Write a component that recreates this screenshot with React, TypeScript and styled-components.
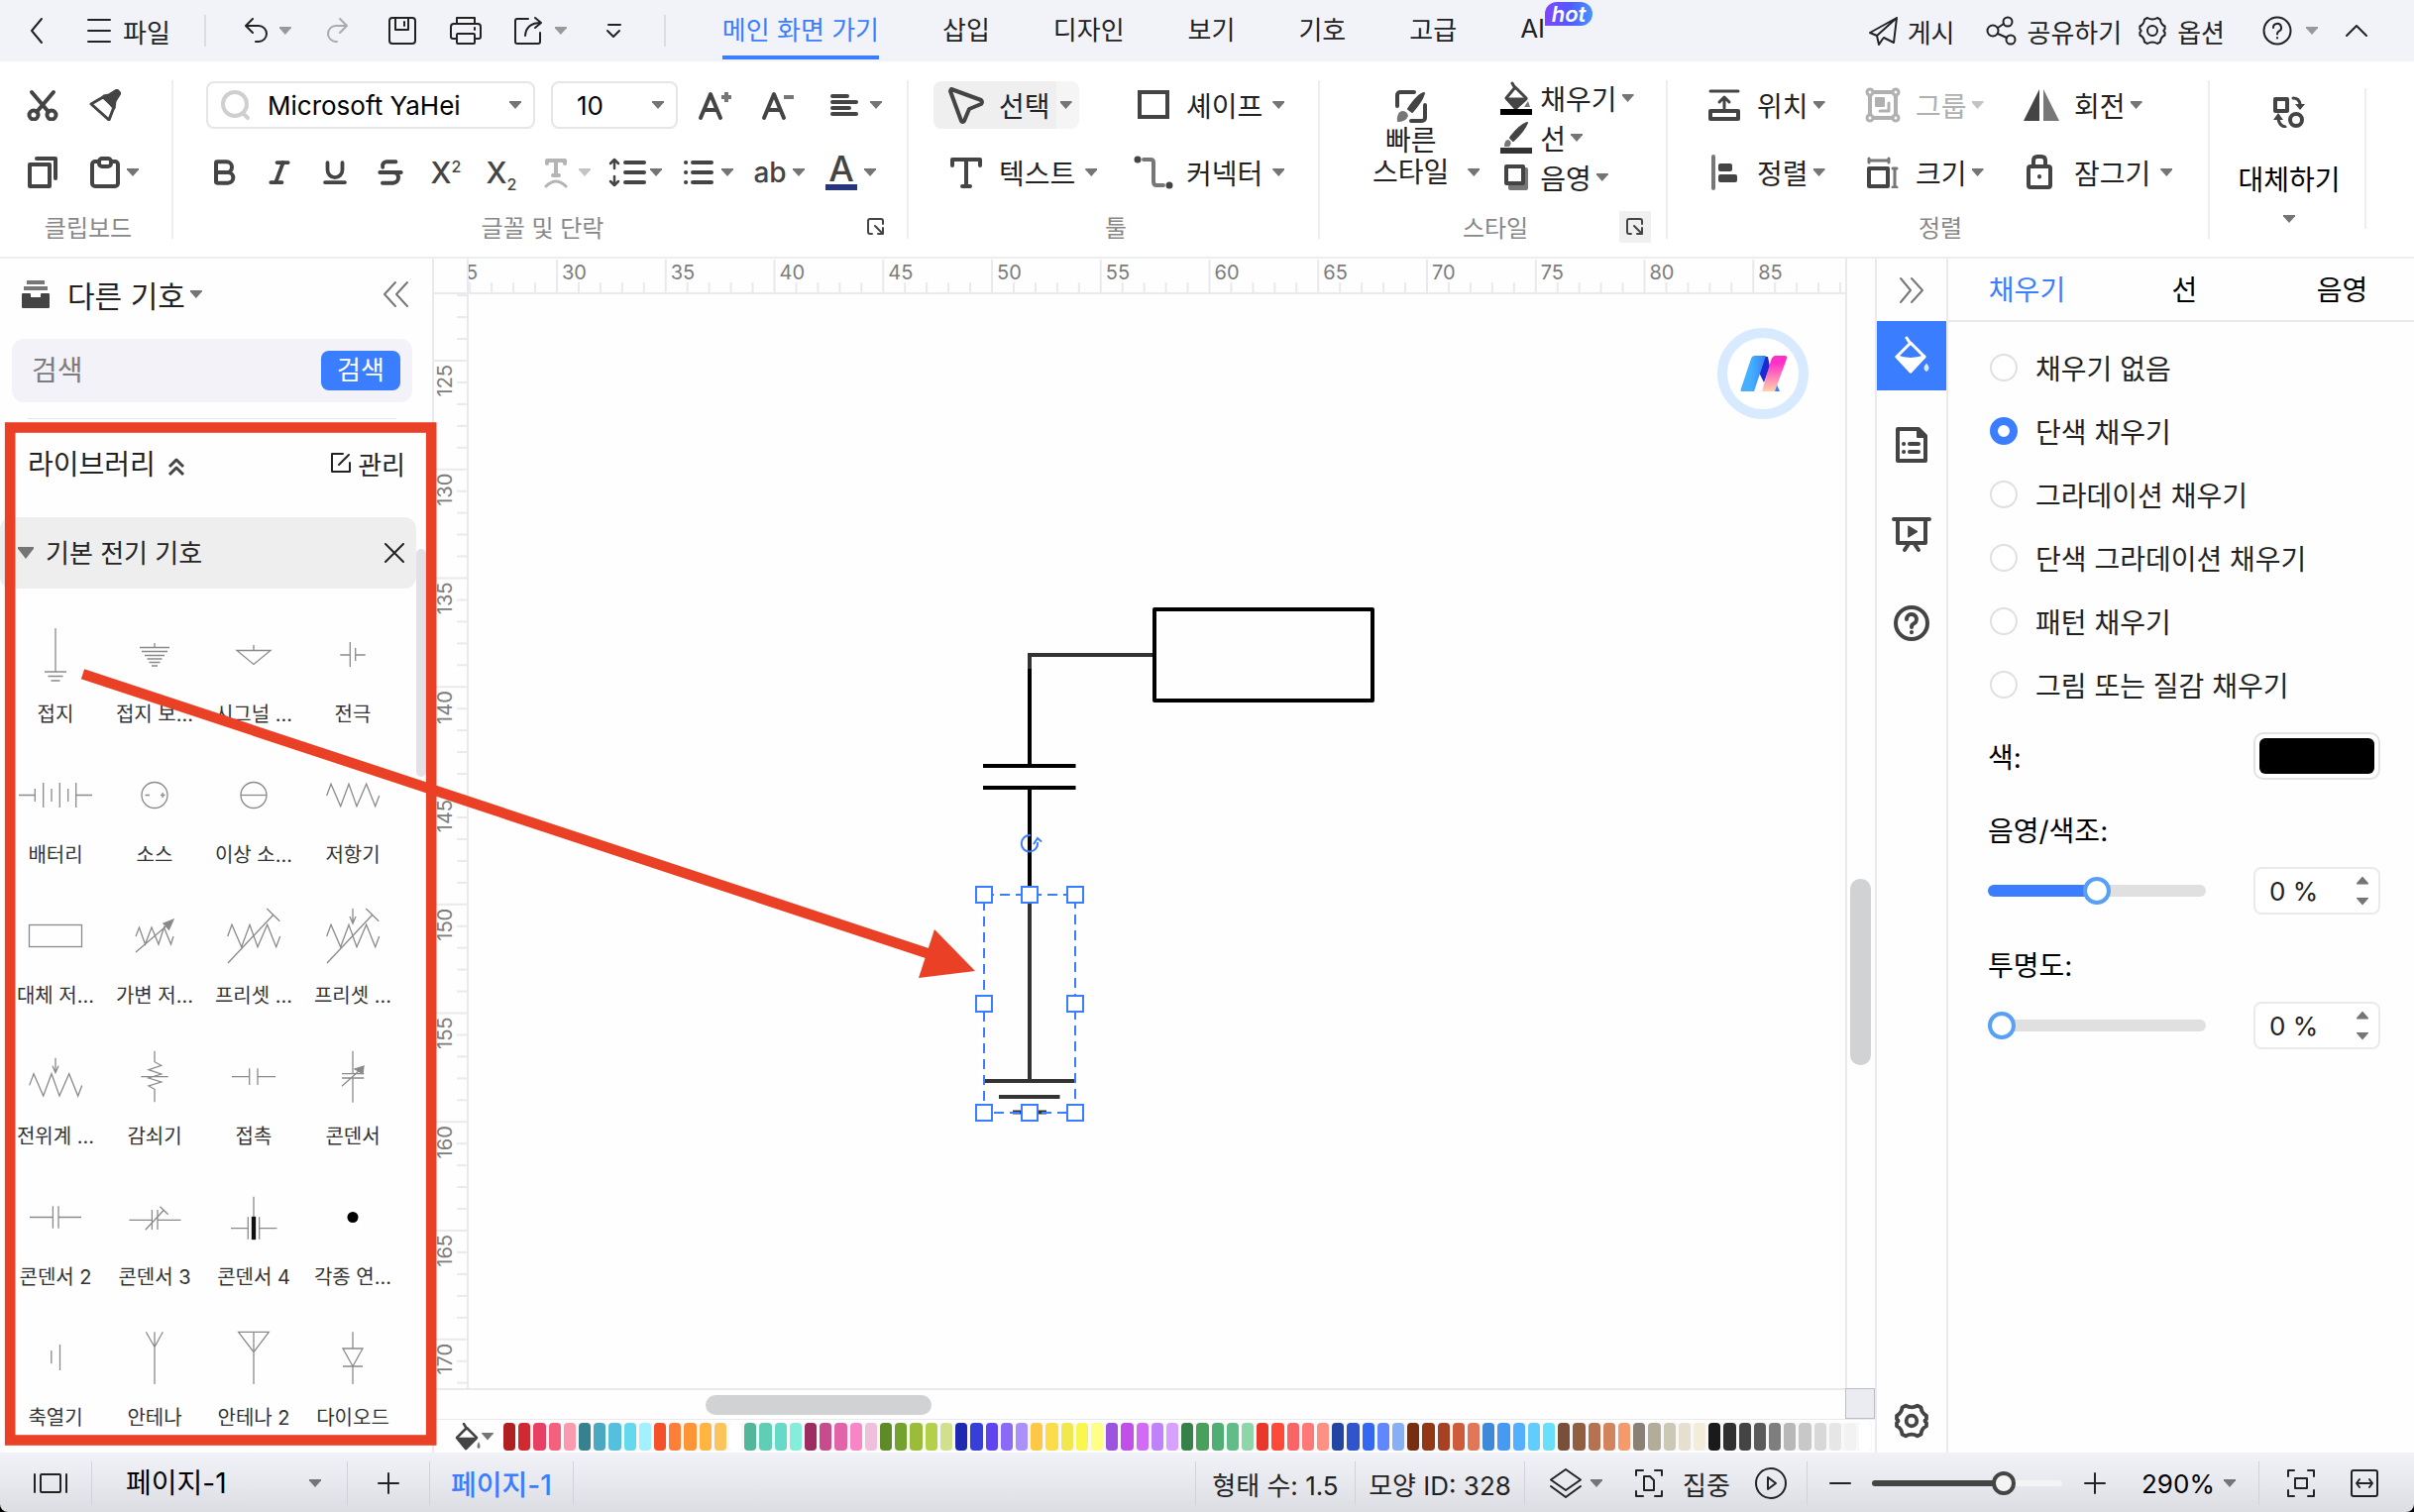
import React from "react";
import styled, { createGlobalStyle, css } from "styled-components";
import { Bold, Italic, Underline, Strikethrough } from "lucide-react";

const FONT = '"Inter", "Noto Sans CJK KR", sans-serif';
const BLUE = "#3a7eff";
const INK = "#444444";
const LINE = "#e9e9ee";
const RED = "#ea4025";

const Global = createGlobalStyle`
  * { box-sizing: border-box; }
  html, body, #root { height: 100%; }
  body { margin: 0; background: #000; font-family: ${FONT}; color: #222; overflow: hidden; }
  button, input, select { font-family: inherit; color: inherit; }
  svg { display: block; flex: none; }
`;

const Shell = styled.div`
  position: relative;
  display: flex;
  flex-direction: column;
  height: 100vh;
  min-height: 900px;
  white-space: nowrap;
`;

const plainButton = css`
  border: 0;
  padding: 0;
  margin: 0;
  background: none;
  display: flex;
  align-items: center;
`;

const Caret = styled.span<{ $color?: string; $up?: boolean; $size?: number }>`
  flex: none;
  width: ${(p) => p.$size ?? 12}px;
  height: ${(p) => ((p.$size ?? 12) > 12 ? 12 : 8)}px;
  background: ${(p) => p.$color ?? "#757575"};
  clip-path: ${(p) =>
    p.$up ? "polygon(0 85%, 50% 0, 100% 85%, 100% 100%, 0 100%)" : "polygon(0 0, 100% 0, 100% 15%, 50% 100%, 0 15%)"};
`;

/* ---------- icons ---------- */

type IconProps = { w?: number; h?: number; sw?: number; color?: string; children: React.ReactNode };
const Icon = ({ w = 32, h = 32, sw = 2, color = "currentColor", children }: IconProps) => (
  <svg width={w} height={h} viewBox={`0 0 ${w} ${h}`} fill="none" stroke={color} strokeWidth={sw} strokeLinecap="round" strokeLinejoin="round" aria-hidden="true">
    {children}
  </svg>
);

const gearPath =
  "M11 3 Q16 6 21 3 L24 4.600 Q24.400 9.600 28.600 11.500 V14.500 Q26 16 28.600 17.500 V20.500 Q24.400 22.400 24 27.400 L21 29 Q16 26 11 29 L8 27.400 Q7.600 22.400 3.400 20.500 V17.500 Q6 16 3.400 14.500 V11.500 Q7.600 9.600 8 4.600 Z";

const BucketIcon = ({ color = INK, drop = "#777" }: { color?: string; drop?: string }) => (
  <Icon w={40} h={40} color={color} sw={3}>
    <path d="M15 2 L19 8" />
    <path d="M19 7 L33 21 L19 36 L5 21 Z" />
    <path d="M5 21 Q19 26 33 21 L19 36 Z" fill={color} />
    <path d="M35 29 q3 4 0 6 q-3 -2 0 -6z" fill={drop} stroke={drop} strokeWidth="2" />
  </Icon>
);

/* ---------- top bar ---------- */

const TopBar = styled.header`
  display: flex;
  align-items: center;
  height: 62px;
  flex: none;
  padding: 0 42px 0 20px;
  background: #f2f3f9;
  font-size: 26px;
`;

const TopButton = styled.button<{ $ml?: number; $gap?: number }>`
  ${plainButton}
  height: 48px;
  gap: ${(p) => p.$gap ?? 10}px;
  margin-left: ${(p) => p.$ml ?? 32}px;
  font-size: 26px;
  color: #222;
`;

const TopDivider = styled.span`
  width: 2px;
  height: 32px;
  margin-left: 34px;
  background: #dcdde3;
`;

const Tabs = styled.nav`
  display: flex;
  height: 62px;
  gap: 64px;
  margin-left: 57px;
`;

const Tab = styled.a<{ $active?: boolean }>`
  position: relative;
  display: flex;
  align-items: center;
  height: 60px;
  border-bottom: 4px solid ${(p) => (p.$active ? BLUE : "transparent")};
  color: ${(p) => (p.$active ? BLUE : "#222")};
  text-decoration: none;
`;

const HotBadge = styled.span`
  position: absolute;
  left: 100%;
  top: 2px;
  width: 48px;
  height: 24px;
  border-radius: 12px 12px 12px 0;
  background: linear-gradient(90deg, #8344ff, #4f5cff 55%, #4595ff);
  color: #fff;
  font-size: 22px;
  font-style: italic;
  font-weight: 600;
  line-height: 24px;
  text-align: center;
`;

const TopRight = styled.div`
  display: flex;
  align-items: center;
  margin-left: auto;
`;

/* ---------- ribbon ---------- */

const Ribbon = styled.section`
  display: flex;
  flex: none;
  height: 199px;
  background: #fff;
  border-bottom: 2px solid #eeeeee;
`;

const Group = styled.div<{ $w: number; $pad: number }>`
  display: flex;
  flex-direction: column;
  width: ${(p) => p.$w}px;
  padding-top: 20px;
  & > :first-child {
    padding-left: ${(p) => p.$pad}px;
  }
`;

const GroupDivider = styled.span<{ $short?: boolean }>`
  width: 2px;
  height: ${(p) => (p.$short ? 142 : 160)}px;
  margin-top: ${(p) => (p.$short ? 27 : 19)}px;
  background: #eeeeee;
`;

const GroupBody = styled.div`
  display: flex;
  flex-direction: column;
  gap: 20px;
  height: 116px;
`;

const ToolGrid = styled.div<{ $cols: string }>`
  display: grid;
  grid-template-columns: ${(p) => p.$cols};
  grid-auto-rows: 48px;
  row-gap: 20px;
  justify-items: start;
`;

const GroupFooter = styled.div`
  display: grid;
  grid-template-columns: 1fr auto 1fr;
  align-items: center;
  height: 32px;
  margin-top: 13px;
  padding: 0 15px 0 20px;
  color: #888;
  font-size: 24px;
`;

const Launcher = styled.button<{ $hover?: boolean }>`
  ${plainButton}
  grid-column: 3;
  justify-self: end;
  justify-content: center;
  width: 32px;
  height: 32px;
  color: ${INK};
  background: ${(p) => (p.$hover ? "#f0f0f0" : "none")};
`;

const FooterLabel = styled.span`
  grid-column: 2;
`;

const Row = styled.div<{ $indent?: number; $gap?: number }>`
  display: flex;
  align-items: center;
  height: 48px;
  gap: ${(p) => p.$gap ?? 0}px;
  padding-left: ${(p) => p.$indent ?? 0}px;
`;

const IconCell = styled.button<{ $w?: number }>`
  ${plainButton}
  justify-content: center;
  width: ${(p) => p.$w ?? 56}px;
  height: 48px;
  color: ${INK};
`;

const PasteCell = styled.button`
  ${plainButton}
  height: 48px;
  padding-left: 6px;
  gap: 6px;
  color: ${INK};
`;

const DropCell = styled.button<{ $muted?: boolean }>`
  ${plainButton}
  width: 72px;
  height: 48px;
  padding-left: 4px;
  color: ${(p) => (p.$muted ? "#b4b4b4" : INK)};
`;

const DropIcon = styled.span`
  display: flex;
  justify-content: center;
  width: 46px;
`;

const Letter = styled.span<{ $size?: number }>`
  font-size: ${(p) => p.$size ?? 32}px;
  font-weight: 500;
  line-height: 32px;
  & sup, & sub { font-size: 16px; line-height: 0; font-weight: 500; }
`;

const FontColor = styled(Letter)`
  display: flex;
  justify-content: center;
  width: 32px;
  height: 36px;
  line-height: 28px;
  border-bottom: 6px solid #27357f;
`;

const Combo = styled.label<{ $w: number }>`
  display: flex;
  align-items: center;
  width: ${(p) => p.$w}px;
  height: 48px;
  padding: 0 12px;
  margin-right: 16px;
  border: 2px solid #e6e6e6;
  border-radius: 8px;
  background: #fff;
`;

const BareSelect = styled.select<{ $pad?: number; $size?: number }>`
  flex: 1;
  min-width: 0;
  appearance: none;
  border: 0;
  outline: 0;
  background: none;
  padding: 0 0 0 ${(p) => p.$pad ?? 0}px;
  font-size: ${(p) => p.$size ?? 26}px;
  color: #000;
`;

const Tool = styled.button<{ $on?: boolean; $muted?: boolean; $gap?: number }>`
  ${plainButton}
  height: 48px;
  padding-right: 7px;
  gap: ${(p) => p.$gap ?? 10}px;
  border-radius: 8px;
  font-size: 28px;
  color: ${(p) => (p.$muted ? "#b0b0b0" : "#222")};
  background: ${(p) => (p.$on ? "linear-gradient(90deg, #efefef 124px, #f5f5f5 124px)" : "none")};
`;

const ToolFace = styled.span<{ $iw?: number }>`
  display: grid;
  grid-template-columns: ${(p) => p.$iw ?? 66}px auto;
  align-items: center;
  & > svg { justify-self: center; }
`;

const StyleBody = styled.div`
  display: flex;
  gap: 13px;
  height: 116px;
`;

const QuickStyle = styled.button`
  ${plainButton}
  align-items: flex-end;
  gap: 19px;
  height: 108px;
  font-size: 28px;
  line-height: 32px;
`;

const QuickFace = styled.span`
  display: flex;
  flex-direction: column;
  align-items: center;
`;

const CaretSlot = styled.span`
  display: flex;
  align-items: center;
  height: 32px;
`;

const StyleList = styled.div`
  display: flex;
  flex-direction: column;
  margin-top: -3px;
  & > button { height: 40px; }
`;

const ReplaceButton = styled.button`
  ${plainButton}
  flex-direction: column;
  width: 156px;
  padding: 35px 0 0 4px;
  font-size: 28px;
  color: #000;
  & > span:nth-of-type(1) { margin-top: 31px; height: 44px; line-height: 44px; }
  & > span:nth-of-type(2) { margin-top: 13px; }
`;

/* ---------- left panel ---------- */

const Main = styled.main`
  display: flex;
  flex: 1;
  min-height: 0;
  background: #fefefe;
`;

const Side = styled.aside`
  display: flex;
  flex-direction: column;
  width: 438px;
  flex: none;
  border-right: 2px solid ${LINE};
  overflow: hidden;
`;

const SideHead = styled.div`
  display: flex;
  align-items: center;
  height: 72px;
  padding: 0 22px;
`;

const SideTitle = styled.button`
  ${plainButton}
  gap: 5px;
  margin: 0 auto 0 18px;
  font-size: 30px;
  color: #222;
`;

const BareButton = styled.button`
  ${plainButton}
  font-size: 26px;
  gap: 7px;
  color: #222;
`;

const SearchBox = styled.form`
  display: flex;
  align-items: center;
  height: 64px;
  margin: 9px 20px 0 12px;
  padding: 0 12px 0 20px;
  border-radius: 12px;
  background: #f2f2f8;
`;

const SearchInput = styled.input`
  flex: 1;
  min-width: 0;
  border: 0;
  outline: 0;
  padding: 0;
  background: none;
  font-size: 28px;
  &::placeholder { color: #7c7c7c; opacity: 1; }
`;

const SearchButton = styled.button`
  width: 80px;
  height: 40px;
  padding: 0;
  border: 0;
  border-radius: 8px;
  background: ${BLUE};
  color: #fff;
  font-size: 26px;
  line-height: 40px;
`;

const SideRule = styled.hr`
  width: 372px;
  height: 1px;
  margin: 16px 0 0 28px;
  border: 0;
  background: #e6e6ea;
`;

const LibraryHead = styled.div`
  display: flex;
  align-items: center;
  height: 88px;
  padding: 0 27px 0 28px;
  font-size: 28px;
  & > svg { margin: 8px auto 0 12px; }
`;

const LibraryScroll = styled.div`
  position: relative;
  margin-top: 11px;
  flex: 1;
  min-height: 0;
`;

const ScrollThumb = styled.span`
  position: absolute;
  top: 32px;
  right: 6px;
  width: 10px;
  height: 230px;
  border-radius: 5px;
  background: #e2e1e8;
`;

const Category = styled.div`
  display: flex;
  align-items: center;
  height: 72px;
  margin-right: 16px;
  padding: 0 12px 0 18px;
  border-radius: 12px;
  background: #eeeeee;
  font-size: 26px;
  & > span:nth-of-type(2) { margin: 0 auto 0 12px; padding-bottom: 4px; }
`;

const SymbolGrid = styled.div`
  display: grid;
  grid-template-columns: repeat(4, 100px);
  grid-auto-rows: 142px;
  padding: 27px 0 0 6px;
`;

const SymbolCell = styled.figure`
  display: flex;
  flex-direction: column;
  align-items: center;
  margin: 0;
`;

const SymbolName = styled.figcaption`
  margin-top: 6px;
  font-size: 20px;
  line-height: 28px;
  color: #333;
`;

const zig = (dy = 0) => `M23.700 ${40 + dy} L28 ${28.3 + dy} L37.700 ${50.7 + dy} L46 ${28.3 + dy} L54 ${50.7 + dy} L63.700 ${28.3 + dy} L72.700 ${50.7 + dy} L76.700 ${40 + dy}`;
const downArrow = (dy = 0) => `M50 ${12 + dy} V${27 + dy} M47 ${20 + dy} L50 ${27 + dy} L53 ${20 + dy}`;

const symbols: { name: string; art: React.ReactNode }[] = [
  { name: "접지", art: <path d="M50 13V57M39 57H61M42.500 61.500H57.500M45.500 66H54.500" /> },
  { name: "접지 보...", art: <path d="M50 28V32.500M35 32.500H65M37 36.500H63M40 40.500H60M42.500 44H57.500M44.500 47.500H55.500M47 51H53" /> },
  { name: "시그널 ...", art: <path d="M50 30V35.500M33 35.500H67L50 49.500Z" /> },
  { name: "전극", art: <path d="M37.300 40H47.300M47.300 27V52M52.700 33V46M52.700 40H62.700" /> },
  { name: "배터리", art: <path d="M13 39.500H29.300M29.300 33V46M37.700 27V52M46 33V46M54.300 27V52M62.700 33V46M70.700 27V52M70.700 39.500H87" /> },
  { name: "소스", art: <><circle cx="50" cy="39.500" r="13" /><path d="M40.500 39.500H45M56 39.500H60.500M58.200 37V42" /></> },
  { name: "이상 소...", art: <><circle cx="50" cy="39.500" r="13" /><path d="M37 39.500H63" /></> },
  { name: "저항기", art: <path d={zig()} /> },
  { name: "대체 저...", art: <rect x="23.500" y="28.500" width="53" height="22" /> },
  { name: "가변 저...", art: <><path d="M31 40L34.500 31L40.500 48L47 31L54 48L59.500 31L66.500 48L69 40M31 56L66 26" /><path d="M69 23L59 27L64.500 33Z" fill="#888" /></> },
  { name: "프리셋 ...", art: <path d={zig() + "M24 67L70.300 17.700M63.300 12L76.300 24.700"} /> },
  { name: "프리셋 ...", art: <path d={zig() + "M24 67L70.300 17.700M63.300 12L76.300 24.700" + downArrow()} /> },
  { name: "전위계 ...", art: <path d={zig(8.4) + downArrow(8.7)} /> },
  { name: "감쇠기", art: <path d="M50 13.700V24.700L56.700 28.300L44 32.700L56.700 37L44 41L56.700 45L44 49L50 52.300V65.300M36.300 39.700H63.700" /> },
  { name: "접촉", art: <path d="M28 39.700H45.700M45.700 31.300V48M54 31.300V48M54 39.700H72" /> },
  { name: "콘덴서", art: <><path d="M50 13.700V36.700M50 41V65.700M39 36.700H61.300M39 41H61.300M39 49.300L56 34" /><path d="M61 29L52 32L60 36.500Z" fill="#888" /></> },
  { name: "콘덴서 2", art: <path d="M24 39.500H47.400M53 39.500H76M47.400 28.300V50.700M53 28.300V50.700" /> },
  { name: "콘덴서 3", art: <path d="M24.400 42.300H47.400M53 42.300H76.500M47.400 32V52M53 32V52M40.700 52.300L59.600 32M55.500 28.700L63.700 36.700" /> },
  { name: "콘덴서 4", art: <><path d="M50 18.700V40M44.300 39.300V61.700M55.700 39.300V61.700M27 50.700H44.300M55.700 50.700H73.400" /><rect x="48.500" y="39.500" width="3" height="22" fill="#111" stroke="#111" /></> },
  { name: "각종 연...", art: <circle cx="50" cy="39.500" r="5.500" fill="#000" stroke="none" /> },
  { name: "축열기", art: <path d="M45.800 32V45.300M54.500 26V52" /> },
  { name: "안테나", art: <path d="M50 13.300V66M41.300 13.300L50 28.500L58.300 13.300" /> },
  { name: "안테나 2", art: <path d="M34.600 13.300H65.300L50 33.700ZM50 13.300V66" /> },
  { name: "다이오드", art: <path d="M50 13.300V30M40 30H60L50 48ZM40 48H60M50 48V66" /> },
];

/* ---------- workspace ---------- */

const Work = styled.section`
  display: flex;
  flex-direction: column;
  flex: 1;
  min-width: 0;
`;

const Sheet = styled.div`
  display: grid;
  grid-template-columns: 35px 1fr 30px;
  grid-template-rows: 36px 1fr 31px;
  flex: 1;
  min-height: 0;
`;

const Corner = styled.div`
  border-right: 2px solid ${LINE};
  border-bottom: 2px solid ${LINE};
`;

const RulerX = styled.div`
  overflow: hidden;
  border-bottom: 2px solid ${LINE};
`;

const RulerY = styled.div`
  overflow: hidden;
  border-right: 2px solid ${LINE};
`;

const ScrollY = styled.div`
  grid-column: 3;
  grid-row: 1 / 3;
  display: flex;
  flex-direction: column;
  padding: 0 4px 0 3px;
  border-left: 2px solid ${LINE};
`;

const ScrollX = styled.div`
  grid-column: 1 / 3;
  display: flex;
  padding: 5px 0 4px;
  border-top: 2px solid ${LINE};
`;

const Spacer = styled.span<{ $grow: number }>`
  flex: ${(p) => p.$grow} 1 0;
`;

const Thumb = styled.span<{ $grow: number }>`
  flex: ${(p) => p.$grow} 1 0;
  border-radius: 10px;
  background: #d1d2d4;
`;

const ScrollCorner = styled.div`
  border: 1px solid #bdbdc6;
  background: #ebebf2;
`;

const Canvas = styled.div`
  position: relative;
  overflow: hidden;
  background: #fefefe;
`;

const AiButton = styled.button`
  position: absolute;
  top: 34px;
  right: 37px;
  display: flex;
  align-items: center;
  justify-content: center;
  width: 92px;
  height: 92px;
  padding: 0;
  border: 10px solid #d8eaff;
  border-radius: 50%;
  background: #fff;
`;

const Palette = styled.div`
  display: flex;
  align-items: center;
  flex: none;
  height: 34px;
  padding-right: 3px;
  border-top: 1px solid ${LINE};
`;

const PaletteFill = styled.button`
  ${plainButton}
  width: 66px;
  margin-right: 4px;
  padding-left: 20px;
`;

const Swatches = styled.div`
  display: flex;
  flex: 1;
  gap: 3px;
  height: 28px;
  background: #f8f8f8;
`;

const Swatch = styled.span<{ $c: string }>`
  flex: 1;
  border-radius: 4px;
  background: ${(p) => p.$c};
`;

const paletteColors = `b02020 d02a30 e84062 f6607f f99aae 37808f 4aa8c0 55bfde 64d9ee a3f0ff
f4502a ff7e38 fd9436 ffb53f fbc45c ffffff 52b69a 5fceb4 66dac8 86ecdc
9c2c62 c64c8c e264a8 f886c6 efc0dc 5e8a28 74a22e 9abc3a b2d048 d2e08e
1e28b0 3640d8 6044f0 8c6af8 aa90f8 fcc846 fcdc48 f0e84c faf650 fdff86
9a54e0 c250e8 d26cf6 c082fa d8a0ff 36804a 48a05a 50ae74 62bc88 8ed6a8
e8382c ff4a3a fa6466 ff7878 ff9084 2444a4 3054cc 3468f0 6088fc 88aef4
762e12 923814 a84024 ce5c3c e27658 3e8ad8 469af4 52b0fe 62ccfa 68e0fc
78503a 925e42 b47250 d4845c f49a6c 8a8076 b4ac9a ccc8b6 e6dece f2ecd8
1a1a1a 303030 444444 5a5a5a 7e7e7e b8b8b8 c8c8c8 d8d8d8 e6e6e6 f2f2f2 ffffff`.split(/\s+/);

/* ---------- right side ---------- */

const Rail = styled.nav`
  display: flex;
  flex-direction: column;
  align-items: stretch;
  width: 74px;
  flex: none;
  gap: 20px;
  border-left: 2px solid ${LINE};
  border-right: 2px solid ${LINE};
  color: ${INK};
`;

const RailButton = styled.button<{ $on?: boolean; $h?: number; $last?: boolean }>`
  ${plainButton}
  justify-content: center;
  height: ${(p) => p.$h ?? 70}px;
  margin-top: ${(p) => (p.$last ? "auto" : p.$on ? "-20px" : "0")};
  color: ${INK};
  background: ${(p) => (p.$on ? BLUE : "none")};
`;

const Inspector = styled.aside`
  display: flex;
  flex-direction: column;
  width: 470px;
  flex: none;
`;

const PropTabs = styled.div`
  display: grid;
  grid-template-columns: repeat(3, 1fr);
  gap: 20px;
  height: 64px;
  padding: 0 3px 2px 10px;
  border-bottom: 2px solid ${LINE};
`;

const PropTab = styled.button<{ $on?: boolean }>`
  ${plainButton}
  justify-content: center;
  font-size: 28px;
  color: ${(p) => (p.$on ? BLUE : "#000")};
`;

const RadioList = styled.fieldset`
  display: flex;
  flex-direction: column;
  margin: 0;
  padding: 14px 0 0 42px;
  border: 0;
`;

const RadioRow = styled.label`
  display: flex;
  align-items: center;
  gap: 18px;
  height: 64px;
  font-size: 28px;
`;

const Radio = styled.input`
  appearance: none;
  width: 28px;
  height: 28px;
  margin: 0;
  border: 2px solid #e0e0e0;
  border-radius: 50%;
  background: #fff;
  &:checked { border: 8px solid ${BLUE}; }
`;

const PropSection = styled.section`
  & + & { margin-top: 12px; }
`;

const PropRow = styled.div<{ $h: number }>`
  display: flex;
  align-items: center;
  justify-content: space-between;
  height: ${(p) => p.$h}px;
  padding: 0 34px 0 40px;
  font-size: 28px;
  color: #000;
`;

const ColorInput = styled.input`
  appearance: none;
  width: 128px;
  height: 48px;
  padding: 4px;
  border: 2px solid #e2e2e2;
  border-radius: 10px;
  background: #fff;
  &::-webkit-color-swatch-wrapper { padding: 0; }
  &::-webkit-color-swatch { border: 0; border-radius: 6px; }
`;

const Range = styled.input<{ $fill: number }>`
  appearance: none;
  width: 220px;
  height: 28px;
  margin: 0;
  background: none;
  &::-webkit-slider-runnable-track {
    height: 12px;
    border-radius: 6px;
    background: linear-gradient(90deg, ${BLUE} ${(p) => p.$fill}%, #e0e0e0 ${(p) => p.$fill}%);
  }
  &::-webkit-slider-thumb {
    appearance: none;
    width: 28px;
    height: 28px;
    margin-top: -8px;
    border: 4px solid #58a0f5;
    border-radius: 50%;
    background: #fff;
  }
`;

const Spin = styled.span`
  display: flex;
  align-items: center;
  width: 128px;
  height: 48px;
  padding: 0 10px 0 14px;
  border: 2px solid #eaeaea;
  border-radius: 8px;
  background: #fff;
`;

const SpinInput = styled.input`
  flex: 1;
  min-width: 0;
  border: 0;
  outline: 0;
  padding: 0;
  font-size: 26px;
  color: #222;
`;

const SpinButtons = styled.span`
  display: flex;
  flex-direction: column;
  gap: 13px;
`;

/* ---------- status bar ---------- */

const Status = styled.footer`
  display: flex;
  align-items: center;
  flex: none;
  height: 60px;
  padding: 2px 28px 0 14px;
  border-radius: 0 0 8px 8px;
  background: linear-gradient(180deg, #f1f2f8, #e8e9ef 50%, #dcdde2);
  font-size: 26px;
  color: #222;
`;

const StatusDivider = styled.span`
  width: 1px;
  height: 44px;
  background: #d2d3da;
`;

const StatusCell = styled.div<{ $w?: number }>`
  display: flex;
  align-items: center;
  justify-content: center;
  width: ${(p) => (p.$w ? `${p.$w}px` : "auto")};
`;

const StatusButton = styled.button<{ $w: number; $blue?: boolean; $gap?: number }>`
  ${plainButton}
  justify-content: center;
  gap: ${(p) => p.$gap ?? 8}px;
  width: ${(p) => p.$w}px;
  height: 48px;
  font-size: ${(p) => (p.$blue ? 28 : 26)}px;
  font-weight: ${(p) => (p.$blue ? 500 : 400)};
  color: ${(p) => (p.$blue ? BLUE : "#222")};
`;

const PageSelect = styled.label<{ $w: number; $l: number; $r: number }>`
  display: flex;
  align-items: center;
  width: ${(p) => p.$w}px;
  padding: 0 ${(p) => p.$r}px 0 ${(p) => p.$l}px;
`;

const Push = styled.span`
  flex: 1;
`;

const ZoomRange = styled.input`
  appearance: none;
  width: 192px;
  height: 24px;
  margin: 0;
  background: none;
  &::-webkit-slider-runnable-track {
    height: 6px;
    border-radius: 3px;
    background: linear-gradient(90deg, ${INK} 70%, #f4f4f6 70%);
  }
  &::-webkit-slider-thumb {
    appearance: none;
    width: 24px;
    height: 24px;
    margin-top: -9px;
    border: 4px solid ${INK};
    border-radius: 50%;
    background: #f4f4f4;
  }
`;

const Annotation = styled.svg`
  position: absolute;
  top: 0;
  left: 0;
  pointer-events: none;
`;

/* ---------- drawing helpers ---------- */

const MINOR = 21.95;

const HorizontalRuler = () => {
  const ticks = [];
  for (let i = 0; i < 64; i++) {
    const x = 89 + (i - 4) * MINOR;
    if (x < 0) continue;
    const major = (i - 4) % 5 === 0;
    ticks.push(<line key={i} x1={x} x2={x} y1={major ? 1 : 24} y2="36" stroke={LINE} strokeWidth="2" />);
    if (major) ticks.push(<text key={`t${i}`} x={x + 5} y="21">{30 + (i - 4)}</text>);
  }
  return (
    <svg width="100%" height="36" fill="#7c7c7c" fontSize="20" fontFamily={FONT}>
      <text x="-3" y="21">5</text>
      {ticks}
    </svg>
  );
};

const VerticalRuler = () => {
  const ticks = [];
  for (let i = 0; i < 51; i++) {
    const y = 67 + (i - 3) * MINOR;
    const major = (i - 3) % 5 === 0;
    ticks.push(<line key={i} y1={y} y2={y} x1={major ? 0 : 23} x2="35" stroke={LINE} strokeWidth="2" />);
    if (major) ticks.push(<text key={`t${i}`} transform={`translate(18 ${y + 4}) rotate(-90)`} textAnchor="end">{125 + (i - 3)}</text>);
  }
  return (
    <svg width="35" height="100%" fill="#7c7c7c" fontSize="20" fontFamily={FONT}>
      {ticks}
    </svg>
  );
};

const handles = [993, 1039, 1085].flatMap((x) => [903, 1013, 1123].map((y) => [x, y])).filter(([x, y]) => !(x === 1039 && y === 1013));

const Diagram = () => (
  <svg width="100%" height="100%" fill="none" strokeWidth="4" aria-label="회로도">
    <g transform="translate(-473 -297)">
      <rect x="1165" y="615" width="220" height="92" stroke="#000" strokeLinejoin="round" />
      <path d="M1163 661H1039V676" stroke="#333" />
      <path d="M1039 675V773M992 773H1085.500M992 795H1085.500M1039 795V895" stroke="#000" />
      <path d="M1039 903V1091M993 1091H1085M1008 1107H1069.500M1022 1122.500H1056" stroke="#333" />
      <g stroke={BLUE} strokeWidth="2">
        <rect x="993" y="903" width="92" height="220" strokeDasharray="10 6" />
        <path d="M1040 843.200A8.200 8.200 0 1 0 1047 850M1043 852L1047 846L1051 849.500" />
        {handles.map(([x, y]) => (
          <rect key={`${x}-${y}`} x={x - 8} y={y - 8} width="16" height="16" fill="#fff" />
        ))}
      </g>
    </g>
  </svg>
);

const SideArrows = ({ right }: { right?: boolean }) => (
  <Icon w={28} h={28} color="#777">
    <path d={right ? "M3 2L13 14L3 26M14 2L25 14L14 26" : "M13 2L2 14L13 26M25 2L14 14L25 26"} />
  </Icon>
);

const LauncherIcon = () => (
  <Icon w={20} h={20}>
    <path d="M6 17H4a2 2 0 0 1-2-2V4a2 2 0 0 1 2-2H15a2 2 0 0 1 2 2V7M9 9L17 17M17 11V17H12" />
  </Icon>
);

const fills = ["채우기 없음", "단색 채우기", "그라데이션 채우기", "단색 그라데이션 채우기", "패턴 채우기", "그림 또는 질감 채우기"];

export default function App() {
  return (
    <Shell>
      <Global />
      <TopBar>
        <TopButton $ml={0} aria-label="뒤로"><Icon><path d="M22 4L12 16L22 28" /></Icon></TopButton>
        <TopButton $ml={36} $gap={12}>
          <Icon w={24} h={26}><path d="M1 2H23M1 13H23M1 24H23" /></Icon>파일
        </TopButton>
        <TopDivider />
        <TopButton aria-label="실행 취소"><Icon><path d="M15 4L8 11L15 18M9 11H21A8 8 0 0 1 21 27H18" /></Icon><Caret $color="#999" /></TopButton>
        <TopButton aria-label="다시 실행"><Icon color="#aaa"><path d="M17 4L24 11L17 18M23 11H13A8 8 0 0 0 13 27H14" /></Icon></TopButton>
        <TopButton aria-label="저장"><Icon><rect x="3" y="3" width="26" height="26" rx="3" /><path d="M9 3V15H22V3M18 7V11" /></Icon></TopButton>
        <TopButton aria-label="인쇄"><Icon><path d="M7 9V3H25V9M7 24H3a2 2 0 0 1-2-2V12a3 3 0 0 1 3-3H28a3 3 0 0 1 3 3V22a2 2 0 0 1-2 2H25M25 13V15" /><rect x="7" y="19" width="18" height="10" rx="1" /></Icon></TopButton>
        <TopButton aria-label="내보내기"><Icon><path d="M15 4H4a2 2 0 0 0-2 2V27a2 2 0 0 0 2 2H25a2 2 0 0 0 2-2V18M12 21Q13 8 28 8M22 3L28 8L22 13" /></Icon><Caret $color="#999" /></TopButton>
        <TopButton aria-label="사용자 지정"><Icon><path d="M10 10H22M9 16L15 22L21 16" /></Icon></TopButton>
        <TopDivider />
        <Tabs>
          <Tab href="#home" $active>메인 화면 가기</Tab>
          <Tab href="#insert">삽입</Tab>
          <Tab href="#design">디자인</Tab>
          <Tab href="#view">보기</Tab>
          <Tab href="#symbol">기호</Tab>
          <Tab href="#advanced">고급</Tab>
          <Tab href="#ai">AI<HotBadge>hot</HotBadge></Tab>
        </Tabs>
        <TopRight>
          <TopButton $gap={9}><Icon><path d="M30 3L3 18L10 21L30 3L27 28L17 23M10 21L12 30L16 24" /></Icon>게시</TopButton>
          <TopButton $gap={9} $ml={32}><Icon><circle cx="7" cy="16" r="5.500" /><circle cx="22" cy="7" r="4.500" /><circle cx="25" cy="25" r="4.500" /><path d="M12 13L18 9M12 19L21 23" /></Icon>공유하기</TopButton>
          <TopButton $gap={9} $ml={15}><Icon><path d={gearPath} /><circle cx="16" cy="16" r="5" /></Icon>옵션</TopButton>
          <TopButton $gap={13} $ml={37} aria-label="도움말"><Icon><circle cx="16" cy="16" r="13.500" /><path d="M12 13a4 4 0 1 1 5.500 3.600Q16 17.500 16 19.500M16 23V23.500" /></Icon><Caret $color="#999" /></TopButton>
          <TopButton $ml={23} aria-label="리본 접기"><Icon><path d="M6 21L16 11L26 21" /></Icon></TopButton>
        </TopRight>
      </TopBar>

      <Ribbon>
        <Group $w={173} $pad={21}>
          <GroupBody>
            <Row $gap={19}>
              <IconCell $w={44} aria-label="잘라내기"><Icon sw={4}><path d="M5 3L22 23M27 3L10 23" /><circle cx="7" cy="26" r="4.500" /><circle cx="25" cy="26" r="4.500" /></Icon></IconCell>
              <IconCell $w={44} aria-label="서식 복사"><Icon sw={3}><path d="M14 8L25 18L20 31L2 15Z" /><path d="M15 7L20 6L28 1L31 4L26 12L25 19Z" fill="currentColor" /></Icon></IconCell>
            </Row>
            <Row $gap={19}>
              <IconCell $w={44} aria-label="복사"><Icon sw={4}><rect x="3" y="8" width="20" height="22" /><path d="M10 2H29V22" /></Icon></IconCell>
              <PasteCell aria-label="붙여넣기"><Icon sw={4}><rect x="3" y="5" width="26" height="25" rx="3" /><rect x="10" y="2" width="12" height="8" rx="3" fill="#fff" /></Icon><Caret /></PasteCell>
            </Row>
          </GroupBody>
          <GroupFooter><FooterLabel>클립보드</FooterLabel></GroupFooter>
        </Group>
        <GroupDivider />

        <Group $w={740} $pad={23}>
          <GroupBody>
            <Row $indent={10}>
              <Combo $w={332}>
                <Icon sw={4} color="#cfcfcf"><ellipse cx="15" cy="15" rx="12" ry="12" /><path d="M23 24L28 29" /></Icon>
                <BareSelect $pad={16} aria-label="글꼴"><option>Microsoft YaHei</option></BareSelect>
                <Caret />
              </Combo>
              <Combo $w={128}>
                <BareSelect $pad={12} aria-label="글꼴 크기"><option>10</option></BareSelect>
                <Caret />
              </Combo>
              <IconCell $w={42} aria-label="글꼴 크게"><Icon w={34} sw={4}><path d="M3 29L13 5L23 29M7 21H19" /><path d="M29 3V13M24 8H34" stroke="#777" strokeLinecap="butt" /></Icon></IconCell>
              <IconCell $w={86} aria-label="글꼴 작게"><Icon w={34} sw={4}><path d="M3 29L13 5L23 29M7 21H19" /><path d="M23 8H33" stroke="#777" strokeLinecap="butt" /></Icon></IconCell>
              <DropCell aria-label="단락 정렬"><DropIcon><Icon w={34} sw={4}><path d="M2 7H17M2 13H26M2 19H19M2 25H26" /></Icon></DropIcon><Caret /></DropCell>
            </Row>
            <Row>
              <IconCell aria-label="굵게"><Bold size={32} strokeWidth={3} /></IconCell>
              <IconCell aria-label="기울임꼴"><Italic size={30} strokeWidth={3} /></IconCell>
              <IconCell aria-label="밑줄"><Underline size={30} strokeWidth={3} /></IconCell>
              <IconCell aria-label="취소선"><Strikethrough size={32} strokeWidth={3} /></IconCell>
              <IconCell aria-label="위 첨자"><Letter $size={30}>X<sup>2</sup></Letter></IconCell>
              <IconCell aria-label="아래 첨자"><Letter $size={30}>X<sub>2</sub></Letter></IconCell>
              <DropCell $muted aria-label="텍스트 효과"><DropIcon><Icon sw={4}><path d="M7 7V4H25V7M16 4V19M13 19H19" /><path d="M6 30Q16 20 26 30" strokeWidth="3" /></Icon></DropIcon><Caret $color="#c4c4c4" /></DropCell>
              <DropCell aria-label="줄 간격"><DropIcon><Icon w={38} sw={4}><path d="M17 6H36M17 16H36M17 26H36" /><path d="M6 3V12M2 7L6 3L10 7M6 20V29M2 25L6 29L10 25" strokeWidth="2.500" /></Icon></DropIcon><Caret /></DropCell>
              <DropCell aria-label="글머리 기호"><DropIcon><Icon sw={4}><path d="M10 6H29M10 16H29M10 26H29M3 6H3.200M3 16H3.200M3 26H3.200" /></Icon></DropIcon><Caret /></DropCell>
              <DropCell aria-label="대소문자"><DropIcon><Letter $size={28}>ab</Letter></DropIcon><Caret /></DropCell>
              <DropCell aria-label="글꼴 색"><DropIcon><FontColor $size={36}>A</FontColor></DropIcon><Caret /></DropCell>
            </Row>
          </GroupBody>
          <GroupFooter><FooterLabel>글꼴 및 단락</FooterLabel><Launcher aria-label="글꼴 설정"><LauncherIcon /></Launcher></GroupFooter>
        </Group>
        <GroupDivider />

        <Group $w={413} $pad={25}>
          <ToolGrid $cols="189px auto">
            <Tool $on><ToolFace><Icon w={38} h={38} sw={4} color={INK}><path d="M4 3L34 14Q36 16 34 18L22 23L17 35Q15 37 14 35L3 5Z" /></Icon>선택</ToolFace><Caret /></Tool>
            <Tool><ToolFace><Icon sw={4} color={INK}><rect x="2" y="3" width="28" height="25" strokeLinejoin="miter" /></Icon>셰이프</ToolFace><Caret /></Tool>
            <Tool><ToolFace><Icon sw={4} color={INK}><path d="M2 9V3H30V9M16 3V30M12 30H20" /></Icon>텍스트</ToolFace><Caret /></Tool>
            <Tool><ToolFace><Icon w={40} h={36} sw={4} color="#777"><path d="M10 5H17Q20 5 20 8V27Q20 31 23 31H30" /><circle cx="4" cy="5" r="3.500" fill={INK} stroke="none" /><circle cx="36" cy="31" r="3.500" fill={INK} stroke="none" /></Icon>커넥터</ToolFace><Caret /></Tool>
          </ToolGrid>
          <GroupFooter><FooterLabel>툴</FooterLabel></GroupFooter>
        </Group>
        <GroupDivider />

        <Group $w={349} $pad={53}>
          <StyleBody>
            <QuickStyle>
              <QuickFace>
                <Icon w={34} h={36} sw={4} color={INK}>
                  <path d="M3 17V6a3 3 0 0 1 3-3H20M31 16V29a3 3 0 0 1-3 3H17" />
                  <path d="M30 4Q24 5 14 20L18 23Q28 12 30 4Z" fill={INK} strokeWidth="2" />
                  <path d="M3 33Q2 23 8 22Q13 22 14 27Q12 33 3 33Z" fill="#777" stroke="none" />
                </Icon>
                <span>빠른</span>
                <span>스타일</span>
              </QuickFace>
              <CaretSlot><Caret /></CaretSlot>
            </QuickStyle>
            <StyleList>
              <Tool $gap={5}><ToolFace $iw={48}><Icon h={34} sw={3} color={INK}><path d="M12 2L15 7M15 6L26 17L15 27L6 17Z" /><path d="M7 18H26L16 27Z" fill={INK} /><path d="M28 20L30 26H24Z" fill="#777" stroke="none" /><path d="M0 31H32" strokeWidth="6" stroke="#000" strokeLinecap="butt" /></Icon>채우기</ToolFace><Caret /></Tool>
              <Tool $gap={5}><ToolFace $iw={48}><Icon h={34} sw={2} color={INK}><path d="M27 2Q19 5 10 17L13 20Q24 10 27 2Z" fill={INK} /><path d="M4 26Q4 19 8 19Q13 21 9 26Z" fill="#777" stroke="none" /><path d="M0 30H32" strokeWidth="6" stroke="#333" strokeLinecap="butt" /></Icon>선</ToolFace><Caret /></Tool>
              <Tool $gap={5}><ToolFace $iw={48}><Icon h={28} sw={4} color={INK}><path d="M10 6H26V25H10Z" fill="#777" stroke="#777" /><rect x="6" y="3" width="17" height="17" fill="#fff" /></Icon>음영</ToolFace><Caret /></Tool>
            </StyleList>
          </StyleBody>
          <GroupFooter><FooterLabel>스타일</FooterLabel><Launcher $hover aria-label="스타일 설정"><LauncherIcon /></Launcher></GroupFooter>
        </Group>
        <GroupDivider />

        <Group $w={545} $pad={24}>
          <ToolGrid $cols="160px 160px auto">
            <Tool $gap={5}><ToolFace><Icon sw={3} color={INK}><path d="M2 2H30M16 19V9M11 13L16 8L21 13" /><rect x="2" y="22" width="28" height="8" strokeWidth="4" /></Icon>위치</ToolFace><Caret /></Tool>
            <Tool $gap={5} $muted><ToolFace><Icon w={36} h={36} sw={4}><rect x="5" y="5" width="26" height="26" /><g fill="#fff" strokeWidth="3"><circle cx="5" cy="5" r="3" /><circle cx="31" cy="5" r="3" /><circle cx="5" cy="31" r="3" /><circle cx="31" cy="31" r="3" /></g><rect x="11" y="11" width="8" height="8" fill="currentColor" strokeWidth="2" /><path d="M24 16V24H15" strokeWidth="3" /></Icon>그룹</ToolFace><Caret $color="#c4c4c4" /></Tool>
            <Tool $gap={5}><ToolFace><Icon w={36}><path d="M16 0V32H0Z" fill={INK} stroke="none" /><path d="M20 0V32H36Z" fill="#777" stroke="none" /></Icon>회전</ToolFace><Caret /></Tool>
            <Tool $gap={5}><ToolFace><Icon w={28} h={36} sw={4} color={INK}><path d="M3 2V34" stroke="#777" /><rect x="8" y="9" width="14" height="8" rx="2" fill={INK} stroke="none" /><rect x="8" y="20" width="19" height="8" rx="2" fill={INK} stroke="none" /></Icon>정렬</ToolFace><Caret /></Tool>
            <Tool $gap={5}><ToolFace><Icon sw={3} color={INK}><path d="M2 2V6M2 4H22M22 2V6M26 12H30M28 12V31M26 31H30" stroke="#777" /><rect x="2" y="12" width="19" height="18" strokeWidth="4" /></Icon>크기</ToolFace><Caret /></Tool>
            <Tool><ToolFace><Icon h={38} sw={4} color={INK}><rect x="3" y="13" width="22" height="21" rx="2" /><path d="M8 13V7Q8 3 12 3H16Q20 3 20 7V13M14 23V23.500" /></Icon>잠그기</ToolFace><Caret /></Tool>
          </ToolGrid>
          <GroupFooter><FooterLabel>정렬</FooterLabel></GroupFooter>
        </Group>
        <GroupDivider />
        <ReplaceButton>
          <Icon sw={4} color={INK}><rect x="2" y="3" width="12" height="12" /><circle cx="23" cy="24" r="6" /><path d="M20 2Q26 2 27 8" strokeWidth="3" /><path d="M32 8L22 8L27 14ZM0 24L10 24L5 17Z" fill={INK} stroke="none" /><path d="M5 23Q6 30 12 31" strokeWidth="3" /></Icon>
          <span>대체하기</span>
          <Caret />
        </ReplaceButton>
        <GroupDivider $short />
      </Ribbon>

      <Main>
        <Side>
          <SideHead>
            <Icon w={28} h={28}><path d="M5 0H23V4H5ZM2 6H26V10H2Z" fill="#777" stroke="none" /><path d="M1 14H8V18H20V14H27V27H1Z" fill={INK} stroke={INK} /></Icon>
            <SideTitle>다른 기호<Caret /></SideTitle>
            <BareButton aria-label="패널 접기"><SideArrows /></BareButton>
          </SideHead>
          <SearchBox onSubmit={(e) => e.preventDefault()}>
            <SearchInput placeholder="검색" aria-label="검색" />
            <SearchButton type="submit">검색</SearchButton>
          </SearchBox>
          <SideRule />
          <LibraryHead>
            <span>라이브러리</span>
            <Icon w={18} h={20} sw={3} color={INK}><path d="M2 10L9 3L16 10M2 18L9 11L16 18" strokeLinecap="butt" /></Icon>
            <BareButton><Icon w={20} h={22}><path d="M12 2H1V20H19V11M8 13L18 3" /></Icon>관리</BareButton>
          </LibraryHead>
          <LibraryScroll>
            <Category>
              <Caret $size={16} />
              <span>기본 전기 기호</span>
              <BareButton aria-label="닫기"><Icon w={20} h={20}><path d="M1 1L19 19M19 1L1 19" /></Icon></BareButton>
            </Category>
            <SymbolGrid>
              {symbols.map((s, i) => (
                <SymbolCell key={i}>
                  <svg width="100" height="80" viewBox="0 0 100 80" fill="none" stroke="#8a8a8a" strokeWidth="1.300" aria-hidden="true">{s.art}</svg>
                  <SymbolName>{s.name}</SymbolName>
                </SymbolCell>
              ))}
            </SymbolGrid>
            <ScrollThumb />
          </LibraryScroll>
        </Side>

        <Work>
          <Sheet>
            <Corner />
            <RulerX><HorizontalRuler /></RulerX>
            <ScrollY><Spacer $grow={627} /><Thumb $grow={188} /><Spacer $grow={326} /></ScrollY>
            <RulerY><VerticalRuler /></RulerY>
            <Canvas>
              <Diagram />
              <AiButton aria-label="AI">
                <svg width="52" height="50" viewBox="0 0 52 50" aria-hidden="true">
                  <defs>
                    <linearGradient id="logoBlue" x1="0" x2="1"><stop offset="0.400" stopColor="#45b0ff" /><stop offset="1" stopColor="#3a80f4" /></linearGradient>
                    <linearGradient id="logoPink" x1="0" x2="0" y1="0" y2="1"><stop offset="0.200" stopColor="#ff2fc8" /><stop offset="1" stopColor="#ffd2a8" /></linearGradient>
                  </defs>
                  <path d="M26 8H31L33 18L27 34L22 24Z" fill="#1d2ad0" />
                  <path d="M39 34L43 43H36Z" fill="#3a80ff" />
                  <path d="M18 7H29L17 43H4Q3 42 4 40L14 10Q15 7 18 7Z" fill="url(#logoBlue)" />
                  <path d="M38 7H49Q51 8 50 10L38 43H25L34 12Q35 8 38 7Z" fill="url(#logoPink)" />
                </svg>
              </AiButton>
            </Canvas>
            <ScrollX><Spacer $grow={274} /><Thumb $grow={228} /><Spacer $grow={923} /></ScrollX>
            <ScrollCorner />
          </Sheet>
          <Palette>
            <PaletteFill aria-label="채우기 색">
              <Icon w={28} h={28} sw={2.5} color={INK}><path d="M10 1L13 6M13 5L23 15L12 26L3 15Z" /><path d="M4 16H22L12 26Z" fill={INK} /><path d="M25 19q3 6 0 7q-3 -1 0 -7z" fill="#777" stroke="none" /></Icon>
              <Caret />
            </PaletteFill>
            <Swatches>{paletteColors.map((c, i) => <Swatch key={i} $c={`#${c}`} />)}</Swatches>
          </Palette>
        </Work>

        <Rail>
          <RailButton $h={63} aria-label="패널 펼치기"><SideArrows right /></RailButton>
          <RailButton $on aria-label="채우기"><BucketIcon color="#fff" drop="#dbe7ff" /></RailButton>
          <RailButton aria-label="페이지"><Icon w={34} h={38} sw={4}><path d="M3 3H24L31 10V35H3Z" /><path d="M23 3V11H31Z" fill="currentColor" strokeWidth="2" /><path d="M15 18H24M15 26H24M9 18H9.200M9 26H9.200" /></Icon></RailButton>
          <RailButton aria-label="프레젠테이션"><Icon w={40} h={38} sw={4}><path d="M2 4H38M6 4V28H34V4M13 35L17 29M27 35L23 29" /><path d="M17 11L26 16.500L17 22Z" fill="currentColor" strokeWidth="1" /></Icon></RailButton>
          <RailButton aria-label="도움말"><Icon w={38} h={38} sw={4}><circle cx="19" cy="19" r="16" /><path d="M14 15a5 5 0 1 1 7 4.500Q19 20.500 19 23M19 28V28.200" /></Icon></RailButton>
          <RailButton $last $h={64} aria-label="설정"><svg width="38" height="38" viewBox="0 0 32 32" fill="none" stroke="currentColor" strokeWidth="3.200" strokeLinejoin="round"><path d={gearPath} /><circle cx="16" cy="16" r="4.500" /></svg></RailButton>
        </Rail>

        <Inspector>
          <PropTabs>
            <PropTab $on>채우기</PropTab>
            <PropTab>선</PropTab>
            <PropTab>음영</PropTab>
          </PropTabs>
          <RadioList aria-label="채우기">
            {fills.map((f, i) => (
              <RadioRow key={f}><Radio type="radio" name="fill" defaultChecked={i === 1} />{f}</RadioRow>
            ))}
          </RadioList>
          <PropRow $h={80}><label htmlFor="color">색:</label><ColorInput id="color" type="color" defaultValue="#000000" /></PropRow>
          <PropSection>
            <PropRow $h={68}><label htmlFor="shade">음영/색조:</label></PropRow>
            <PropRow $h={56}>
              <Range id="shade" type="range" $fill={50} defaultValue={50} />
              <Spin><SpinInput aria-label="음영/색조 값" defaultValue="0 %" /><SpinButtons><Caret $up /><Caret /></SpinButtons></Spin>
            </PropRow>
          </PropSection>
          <PropSection>
            <PropRow $h={68}><label htmlFor="opacity">투명도:</label></PropRow>
            <PropRow $h={56}>
              <Range id="opacity" type="range" $fill={0} defaultValue={0} />
              <Spin><SpinInput aria-label="투명도 값" defaultValue="0 %" /><SpinButtons><Caret $up /><Caret /></SpinButtons></Spin>
            </PropRow>
          </PropSection>
        </Inspector>
      </Main>

      <Status>
        <StatusButton $w={74} aria-label="페이지 보기"><Icon w={36} h={22}><path d="M2 2V20M34 2V20" /><rect x="8" y="2" width="20" height="18" rx="1" /></Icon></StatusButton>
        <StatusCell $w={4} />
        <StatusDivider />
        <PageSelect $w={257} $l={34} $r={26}><BareSelect $size={28} aria-label="페이지"><option>페이지-1</option></BareSelect><Caret /></PageSelect>
        <StatusDivider />
        <StatusButton $w={82} aria-label="페이지 추가"><Icon w={22} h={22}><path d="M11 1V21M1 11H21" /></Icon></StatusButton>
        <StatusDivider />
        <StatusButton $w={144} $blue>페이지-1</StatusButton>
        <StatusDivider />
        <Push />
        <StatusDivider />
        <StatusCell $w={160}>형태 수: 1.5</StatusCell>
        <StatusDivider />
        <StatusCell $w={170}>모양 ID: 328</StatusCell>
        <StatusDivider />
        <StatusButton $w={102} aria-label="레이어"><Icon w={34}><path d="M17 2L32 12.500L17 23L2 12.500ZM2 19L17 30L32 19" /></Icon><Caret /></StatusButton>
        <StatusButton $w={114} $gap={20}><Icon w={28}><path d="M1 8V3H8M20 3H27V8M27 24V29H20M8 29H1V24M9 9H15L19 13V23H9Z" /></Icon>집중</StatusButton>
        <StatusButton $w={64} aria-label="재생"><Icon w={34} h={34}><circle cx="17" cy="17" r="15" /><path d="M14 11L22 17L14 23Z" /></Icon></StatusButton>
        <StatusCell $w={4} />
        <StatusDivider />
        <StatusButton $w={65} aria-label="축소"><Icon w={22} h={22}><path d="M1 11H21" /></Icon></StatusButton>
        <ZoomRange type="range" defaultValue={72} aria-label="확대/축소" />
        <StatusButton $w={66} aria-label="확대"><Icon w={22} h={22}><path d="M11 1V21M1 11H21" /></Icon></StatusButton>
        <PageSelect $w={132} $l={14} $r={23}><BareSelect aria-label="배율"><option>290%</option></BareSelect><Caret /></PageSelect>
        <StatusDivider />
        <StatusButton $w={84} aria-label="화면에 맞춤"><Icon w={28} h={28}><path d="M1 7V1H7M21 1H27V7M27 21V27H21M7 27H1V21" /><rect x="8" y="9" width="12" height="10" /></Icon></StatusButton>
        <StatusButton $w={44} aria-label="너비에 맞춤"><Icon w={28} h={28}><rect x="1" y="1" width="26" height="26" rx="2" /><path d="M6 14H22M9 10L6 14L9 18M19 10L22 14L19 18" /></Icon></StatusButton>
      </Status>

      <Annotation width="1000" height="1480" aria-hidden="true">
        <rect x="10.200" y="431.500" width="425" height="1022" fill="none" stroke={RED} strokeWidth="10.600" />
        <path d="M83.500 680.300L940 963.500" stroke={RED} strokeWidth="10.500" />
        <path d="M984 980L943 938L927 987Z" fill={RED} />
      </Annotation>
    </Shell>
  );
}
